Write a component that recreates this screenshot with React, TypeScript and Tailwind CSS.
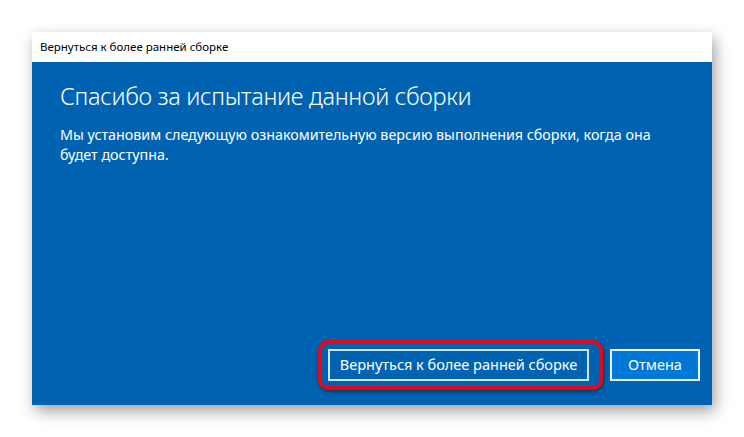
import React from "react";

export default function App() {
  return (
    <div className="w-[744px] h-[437px] bg-white overflow-hidden" style={{ fontFamily: '"Noto Sans", "Open Sans", sans-serif' }}>
      <div className="ml-[32px] mt-[32px] w-[680px] flex flex-col shadow-[3px_6px_14px_rgba(0,0,0,0.38)]">
        <div className="h-[30px] bg-white flex items-center pl-[8px] text-[11.5px] text-black">
          Вернуться к более ранней сборке
        </div>
        <div className="h-[343px] bg-[#0063b1] flex flex-col pl-[28px] pr-[12px] pb-[24px] text-white">
          <h1 className="mt-[18px] text-[23.5px] font-light leading-[32px] tracking-[-0.3px]">
            Спасибо за испытание данной сборки
          </h1>
          <p className="mt-[13px] text-[14.3px] leading-[20px] pr-[16px]">
            Мы установим следующую ознакомительную версию выполнения сборки, когда она будет доступна.
          </p>
          <div className="mt-auto flex justify-end gap-[21px]">
            <div className="relative">
              <span className="absolute left-[-10px] right-[-14px] top-[-9px] bottom-[-9px] rounded-[10px] border-[4px] border-[#e3081c] shadow-[1px_2px_4px_rgba(0,0,0,0.45)]" />
              <button className="relative w-[261px] h-[32px] border-2 border-[#d4e6f5] bg-[#0063b1] text-[14.5px] text-white flex items-center justify-center">
                Вернуться к более ранней сборке
              </button>
            </div>
            <button className="w-[90px] h-[32px] border-2 border-[#eaf3fb] bg-[#0078d7] text-[14.5px] text-white flex items-center justify-center">
              Отмена
            </button>
          </div>
        </div>
      </div>
    </div>
  );
}
